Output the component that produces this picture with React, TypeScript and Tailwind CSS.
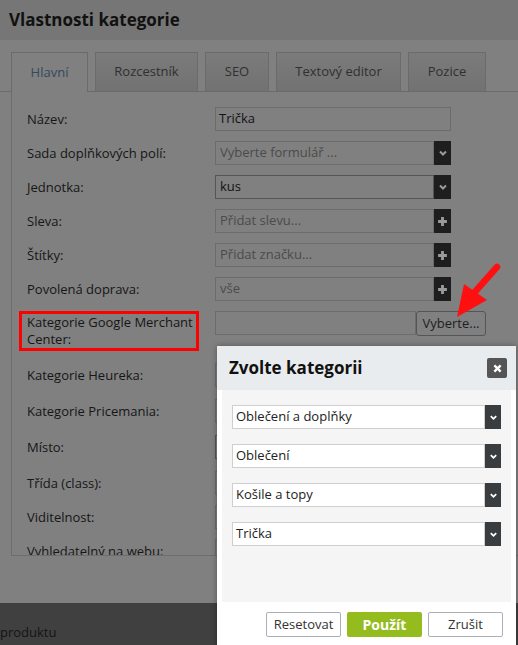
import React from 'react';

type Row = {
  label: string;
  kind: 'text' | 'select' | 'add' | 'empty';
  value?: string;
  muted?: boolean;
  strong?: boolean;
  gap?: string;
};

const rows: Row[] = [
  { label: 'Název:', kind: 'text', value: 'Trička' },
  { label: 'Sada doplňkových polí:', kind: 'select', value: 'Vyberte formulář ...', muted: true, gap: 'mt-[10px]' },
  { label: 'Jednotka:', kind: 'select', value: 'kus', strong: true, gap: 'mt-[10px]' },
  { label: 'Sleva:', kind: 'add', value: 'Přidat slevu...', muted: true, gap: 'mt-[10px]' },
  { label: 'Štítky:', kind: 'add', value: 'Přidat značku...', muted: true, gap: 'mt-[10px]' },
  { label: 'Povolená doprava:', kind: 'add', value: 'vše', muted: true, gap: 'mt-[10px]' },
];

const lowerRows: Row[] = [
  { label: 'Kategorie Heureka:', kind: 'empty', gap: 'mt-[12px]' },
  { label: 'Kategorie Pricemania:', kind: 'empty', gap: 'mt-[12px]' },
  { label: 'Místo:', kind: 'empty', strong: true, gap: 'mt-[12px]' },
  { label: 'Třída (class):', kind: 'empty', gap: 'mt-[12px]' },
  { label: 'Viditelnost:', kind: 'empty', gap: 'mt-[10px]' },
  { label: 'Vyhledatelný na webu:', kind: 'empty', gap: 'mt-[10px]' },
];

const tabs = ['Rozcestník', 'SEO', 'Textový editor', 'Pozice'];
const tabWidths = ['w-[103px]', 'w-[64px]', 'w-[125px]', 'w-[78px]'];

function Chevron({ className }: { className: string }) {
  return (
    <svg viewBox="0 0 10 10" className={className}>
      <path d="M2 3.5 L5 6.5 L8 3.5" fill="none" stroke="currentColor" strokeWidth="2" />
    </svg>
  );
}

function Plus() {
  return (
    <svg viewBox="0 0 10 10" className="h-[11px] w-[11px] text-[#9a9a9a]">
      <path d="M5 1 V9 M1 5 H9" stroke="currentColor" strokeWidth="2.6" />
    </svg>
  );
}

function Field({ row }: { row: Row }) {
  const border = row.strong ? 'border-[#555]' : 'border-[#6c6c6c]';
  const textCls = row.muted ? 'text-[#4b4b4b]' : 'text-[#161116]';
  if (row.kind === 'select' || row.kind === 'add') {
    return (
      <div className="flex h-[24px] w-[236px]">
        <div className={`flex flex-1 items-center border ${border} px-[4px] ${textCls}`}>{row.value}</div>
        <div className="flex w-[17px] items-center justify-center bg-[#1e1e1e]">
          {row.kind === 'select' ? <Chevron className="h-[10px] w-[10px] text-[#9a9a9a]" /> : <Plus />}
        </div>
      </div>
    );
  }
  return (
    <div className={`flex h-[24px] w-[236px] items-center border ${border} px-[3px] ${textCls}`}>{row.value}</div>
  );
}

function FormRow({ row }: { row: Row }) {
  return (
    <div className={`flex items-center ${row.gap ?? ''}`}>
      <div className="w-[188px] leading-[18px] text-[#161616]">{row.label}</div>
      <Field row={row} />
    </div>
  );
}

function DialogSelect({ value }: { value: string }) {
  return (
    <div className="flex h-[24px] w-[269px] bg-white">
      <div className="flex flex-1 items-center border border-[#cfcfcf] pl-[3px] text-[13px] text-[#222]">{value}</div>
      <div className="flex w-[16px] items-center justify-center bg-[#3a3d40]">
        <Chevron className="h-[9px] w-[9px] text-white" />
      </div>
    </div>
  );
}

export default function App() {
  return (
    <div className="relative h-[645px] w-[518px] overflow-hidden bg-[#808080] text-[13px] font-['Open_Sans',sans-serif]">
      <div className="flex h-[40px] items-center bg-[#767676] px-[9px]">
        <h1 className="text-[17px] font-bold text-[#111]">Vlastnosti kategorie</h1>
      </div>

      <div className="mt-[12px] flex h-[40px] items-end gap-[7px] border-b border-[#6b6b6b] pl-[11px]">
        <div className="-mb-px flex h-[40px] w-[77px] items-center justify-center border border-b-0 border-[#6b6b6b] bg-[#808080] text-[#34495a]">
          Hlavní
        </div>
        {tabs.map((t, i) => (
          <div
            key={t}
            className={`flex h-[39px] ${tabWidths[i]} items-center justify-center border border-b-0 border-[#6b6b6b] bg-gradient-to-b from-[#7b7b7b] to-[#727272] text-[#303030]`}
          >
            {t}
          </div>
        ))}
      </div>

      <div className="ml-[11px] h-[464px] overflow-hidden border-b border-l border-[#6d6d6d] pl-[15px] pt-[15px]">
        {rows.map((r) => (
          <FormRow key={r.label} row={r} />
        ))}
        <div className="mt-[10px] flex items-start">
          <div className="w-[188px]">
            <div className="-ml-[8px] h-[40px] w-[180px] border-[3px] border-[#ff0000] pl-[5px] leading-[17px] text-[#161616]">
              Kategorie Google Merchant Center:
            </div>
          </div>
          <div className="flex h-[24px] w-[201px] border border-[#6c6c6c]" />
          <div className="flex h-[25px] w-[70px] items-center justify-center rounded-[3px] border border-[#555] text-[#1e1e1e]">
            Vyberte...
          </div>
        </div>
        {lowerRows.map((r) => (
          <FormRow key={r.label} row={r} />
        ))}
      </div>

      <div className="mt-[47px] h-[42px] bg-[#404040] pt-[20px] text-[#141414]">
        <span>produktu</span>
      </div>

      <svg className="absolute left-[440px] top-[255px] h-[70px] w-[70px]" viewBox="440 255 70 70">
        <path d="M497 267 L473 294" stroke="#ff1010" strokeWidth="6.5" strokeLinecap="round" />
        <path d="M464 284 L487 300 L457 317 Z" fill="#ff1010" />
      </svg>

      <div className="absolute left-[217px] top-[346px] flex h-[310px] w-[299px] flex-col bg-white shadow-[0_0_6px_rgba(0,0,0,0.35)]">
        <div className="flex h-[44px] items-center justify-between bg-[#e9ecef] pl-[12px] pr-[9px]">
          <h2 className="text-[17px] font-bold text-[#111]">Zvolte kategorii</h2>
          <div className="flex h-[20px] w-[20px] items-center justify-center rounded-[2px] bg-[#555]">
            <svg viewBox="0 0 10 10" className="h-[9px] w-[9px]">
              <path d="M1.5 1.5 L8.5 8.5 M8.5 1.5 L1.5 8.5" stroke="white" strokeWidth="2.6" />
            </svg>
          </div>
        </div>
        <div className="mx-[5px] flex h-[212px] flex-col gap-[15px] bg-[#f5f5f5] pl-[10px] pt-[15px]">
          <DialogSelect value="Oblečení a doplňky" />
          <DialogSelect value="Oblečení" />
          <DialogSelect value="Košile a topy" />
          <DialogSelect value="Trička" />
        </div>
        <div className="flex justify-end gap-[6px] pr-[13px] pt-[10px]">
          <button className="h-[25px] w-[75px] rounded-[2px] border border-[#a9b0b8] bg-white text-[13px] text-[#333]">
            Resetovat
          </button>
          <button className="h-[25px] w-[75px] rounded-[2px] bg-[#95bc1e] text-[14px] font-bold text-white">
            Použít
          </button>
          <button className="h-[25px] w-[75px] rounded-[2px] border border-[#a9b0b8] bg-white text-[13px] text-[#333]">
            Zrušit
          </button>
        </div>
      </div>
    </div>
  );
}
